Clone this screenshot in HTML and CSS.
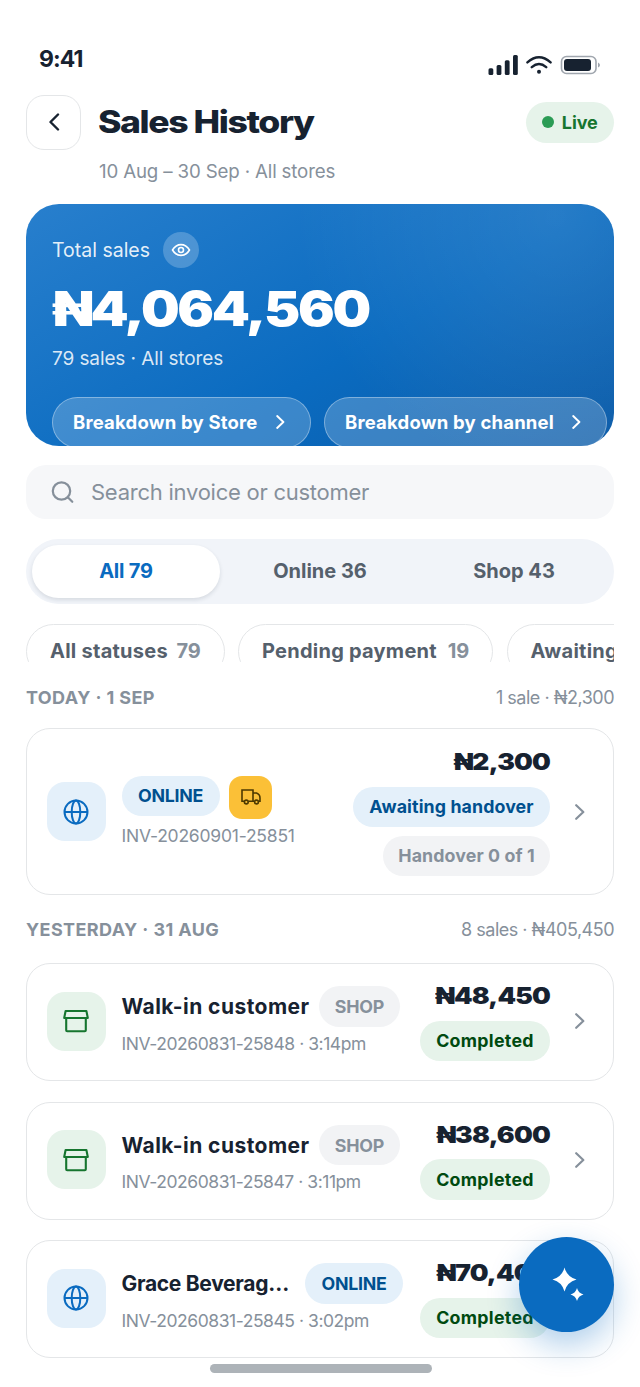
FILE: index.html
```html
<!DOCTYPE html>
<html lang="en">
<head>
<meta charset="utf-8">
<title>Sales History</title>
<link rel="stylesheet" href="styles.css">
</head>
<body>
<svg class="sprite" aria-hidden="true">
  <symbol id="globe" viewBox="0 0 26 26"><g fill="none" stroke="currentColor" stroke-width="2"><circle cx="13" cy="13" r="11.5"/><ellipse cx="13" cy="13" rx="4.3" ry="11.5"/><path d="M1.5 13h23"/></g></symbol>
  <symbol id="store" viewBox="0 0 26 26"><path d="M2.6 3h20.8l1.4 7H1.2zM3.2 10v12.2q0 1 1 1h17.600q1 0 1-1V10" fill="none" stroke="currentColor" stroke-width="2.1" stroke-linejoin="round"/></symbol>
  <symbol id="chevron" viewBox="0 0 10 16"><path d="M1.2 1.200 8.300 8l-7.100 6.800" fill="none" stroke="currentColor" stroke-width="2.2" stroke-linecap="round" stroke-linejoin="round"/></symbol>
</svg>
<div class="screen">
  <div class="status-bar">
    <span class="clock">9:41</span>
    <svg class="status-icons" width="112" height="22" viewBox="0 0 112 22">
      <g fill="#172230"><rect x="0.500" y="13.200" width="4.800" height="6.800" rx="1.500"/><rect x="8.600" y="10" width="4.800" height="10" rx="1.500"/><rect x="16.800" y="5.200" width="4.800" height="14.800" rx="1.500"/><rect x="25" y="0" width="4.800" height="20" rx="1.500"/><circle cx="51" cy="16.800" r="2"/></g>
      <path d="M39.400 7.400q11.600-10.200 23.200 0M43.800 12.200q7.200-6.300 14.400 0" fill="none" stroke="#172230" stroke-width="2.400" stroke-linecap="round"/>
      <rect x="73.500" y="1.500" width="34.500" height="17" rx="5" fill="none" stroke="#a0a6ae" stroke-width="1.600"/>
      <rect x="76" y="4" width="27" height="12" rx="3" fill="#172230"/>
      <path d="M110 7.500q2 1 2 2.500t-2 2.500z" fill="#a0a6ae"/>
    </svg>
  </div>

  <header class="header">
    <button class="back" aria-label="Back"><svg width="12" height="18" viewBox="0 0 12 18"><path d="M10 1.500 2.500 9l7.500 7.500" fill="none" stroke="#172230" stroke-width="2.400" stroke-linecap="round" stroke-linejoin="round"/></svg></button>
    <h1 class="title">Sales History</h1>
    <span class="live"><i class="live-dot"></i><span>Live</span></span>
  </header>
  <p class="subtitle">10 Aug – 30 Sep · All stores</p>

  <section class="hero">
    <div class="hero-label"><span>Total sales</span><span class="eye"><svg width="20" height="16" viewBox="0 0 20 16" fill="none" stroke="#fff" stroke-width="1.600"><path d="M1.500 8C6 0.800 14 0.800 18.500 8 14 15.200 6 15.200 1.500 8z" stroke-linejoin="round"/><circle cx="10" cy="8" r="2.500"/></svg></span></div>
    <div class="hero-amount">₦4,064,560</div>
    <div class="hero-meta">79 sales · All stores</div>
    <div class="hero-actions">
      <button class="glass store-btn"><span>Breakdown by Store</span><svg class="chev chev-sm"><use href="#chevron"/></svg></button>
      <button class="glass channel-btn"><span>Breakdown by channel</span><svg class="chev chev-sm"><use href="#chevron"/></svg></button>
    </div>
  </section>

  <div class="search"><svg width="24" height="24" viewBox="0 0 24 24" fill="none" stroke="#86909b" stroke-width="2.200" stroke-linecap="round"><circle cx="10.500" cy="11" r="8.700"/><path d="m17 17.500 4.300 4.300"/></svg><span>Search invoice or customer</span></div>

  <nav class="segments">
    <span class="segment active">All 79</span><span class="segment">Online 36</span><span class="segment">Shop 43</span>
  </nav>

  <div class="chips">
    <span class="chip chip-all"><b>All statuses</b><em>79</em></span>
    <span class="chip chip-pending"><b>Pending payment</b><em>19</em></span>
    <span class="chip chip-await"><b>Awaiting</b></span>
  </div>

  <div class="day day-today"><h2>TODAY · 1 SEP</h2><span>1 sale · ₦2,300</span></div>
  <article class="sale sale-tall">
    <span class="tile blue"><svg width="26" height="26"><use href="#globe"/></svg></span>
    <div class="info">
      <div class="badges"><span class="pill blue-pill tag-online">ONLINE</span><span class="truck"><svg width="20" height="16" viewBox="0 0 20 16" fill="none" stroke="#4d3900" stroke-width="1.600"><path d="M3 12.300H1V1h11v11.300H7.500M12 4h3.500q3.500 1.300 3.500 5v3.300h-1.500M13.500 12.300H12"/><circle cx="5.300" cy="13" r="1.900"/><circle cx="15.500" cy="13" r="1.900"/></svg></span></div>
      <div class="invoice inv-plain">INV-20260901-25851</div>
    </div>
    <div class="result"><div class="amount">₦2,300</div><span class="pill blue-pill awaiting">Awaiting handover</span><span class="pill gray-pill handover">Handover 0 of 1</span></div>
    <svg class="chev go"><use href="#chevron"/></svg>
  </article>

  <div class="day"><h2>YESTERDAY · 31 AUG</h2><span>8 sales · ₦405,450</span></div>
  <div class="sales">
    <article class="sale">
      <span class="tile green"><svg width="26" height="26"><use href="#store"/></svg></span>
      <div class="info"><div class="who"><strong>Walk-in customer</strong><span class="pill gray-pill tag-shop">SHOP</span></div><div class="invoice">INV-20260831-25848 · 3:14pm</div></div>
      <div class="result"><div class="amount">₦48,450</div><span class="pill green-pill">Completed</span></div>
      <svg class="chev go"><use href="#chevron"/></svg>
    </article>
    <article class="sale">
      <span class="tile green"><svg width="26" height="26"><use href="#store"/></svg></span>
      <div class="info"><div class="who"><strong>Walk-in customer</strong><span class="pill gray-pill tag-shop">SHOP</span></div><div class="invoice">INV-20260831-25847 · 3:11pm</div></div>
      <div class="result"><div class="amount">₦38,600</div><span class="pill green-pill">Completed</span></div>
      <svg class="chev go"><use href="#chevron"/></svg>
    </article>
    <article class="sale">
      <span class="tile blue"><svg width="26" height="26"><use href="#globe"/></svg></span>
      <div class="info"><div class="who who-online"><strong>Grace Beverag…</strong><span class="pill blue-pill tag-online">ONLINE</span></div><div class="invoice">INV-20260831-25845 · 3:02pm</div></div>
      <div class="result"><div class="amount">₦70,400</div><span class="pill green-pill">Completed</span></div>
      <svg class="chev go"><use href="#chevron"/></svg>
    </article>
  </div>
  <div class="home-bar"></div>
  <button class="fab" aria-label="Assistant"><svg width="34" height="36" viewBox="0 0 34 36" fill="#fff"><path d="M13.500 0.500Q16 10 25.500 12.500 16 15 13.500 24.500 11 15 1.500 12.500 11 10 13.500 0.500zM26 21q1.300 5.200 6.500 6.500-5.200 1.300-6.500 6.500-1.300-5.200-6.500-6.500Q24.700 26.200 26 21z"/></svg></button>
</div>
</body>
</html>
```
FILE: styles.css
```css
* { box-sizing: border-box; }
body { margin: 0; background: #fff; font-family: Inter, "Noto Sans", sans-serif; color: #172230; }
h1, h2, p { margin: 0; }
button { font: inherit; border: 0; padding: 0; }
svg { display: block; flex: none; }
.sprite { position: absolute; width: 0; height: 0; }
.screen { position: relative; width: 640px; height: 1387px; padding: 0 26px; overflow: hidden; white-space: nowrap; background: #fff; }

.status-bar { height: 94.500px; padding: 45px 14px 0 13px; display: flex; justify-content: space-between; align-items: flex-start; }
.clock { font-size: 23px; font-weight: 650; line-height: 28px; letter-spacing: -0.900px; }
.status-icons { margin: 10px 0 0; }

.header { height: 55px; display: flex; align-items: center; }
.back { width: 55px; height: 55px; border: 1.500px solid #e4e6e8; border-radius: 18px; background: #fff; display: flex; align-items: center; justify-content: center; }
.title { margin-left: 17px; font-size: 31.500px; font-weight: 800; letter-spacing: -1.250px; line-height: 40px; transform: scaleX(1.130); transform-origin: left; }
.live { margin-left: auto; width: 88px; height: 41px; border-radius: 21px; background: #e6f3ea; color: #16752f; display: flex; align-items: center; justify-content: center; gap: 7.500px; font-size: 18px; font-weight: 700; letter-spacing: -0.100px; }
.live-dot { width: 12px; height: 12px; border-radius: 50%; background: #2b9c55; }
.subtitle { margin-left: 73px; height: 54px; padding-top: 10px; line-height: 24px; font-size: 18.700px; letter-spacing: -0.150px; color: #86909b; }

.hero { height: 242px; border-radius: 33px; padding: 28px 6px 0 26px; overflow: hidden; color: #fff; background: radial-gradient(circle at 90% 5%, rgba(255,255,255,.11), rgba(255,255,255,0) 45%), linear-gradient(150deg, #287fcd 0%, #0a6bc0 58%, #0b5ba8 100%); }
.hero-label { height: 37px; display: flex; align-items: center; gap: 12.500px; font-size: 19.500px; letter-spacing: 0; color: rgba(255,255,255,.9); }
.eye { width: 36px; height: 36px; border-radius: 50%; background: rgba(255,255,255,.22); display: flex; align-items: center; justify-content: center; }
.hero-amount { height: 60px; margin-top: 10px; line-height: 60px; font-size: 48px; font-weight: 900; letter-spacing: -2px; transform: scaleX(1.135); transform-origin: left; }
.hero-meta { height: 28px; margin-top: 5px; line-height: 29px; font-size: 19px; letter-spacing: -0.100px; color: rgba(255,255,255,.85); }
.hero-actions { margin-top: 25px; display: flex; gap: 13.500px; }
.glass { height: 51px; flex: none; border: 1.500px solid rgba(255,255,255,.35); border-radius: 26px; background: rgba(255,255,255,.2); color: #fff; display: flex; align-items: center; justify-content: space-between; padding: 0 25px 1px 20px; font-size: 18.500px; font-weight: 700; letter-spacing: 0.200px; }
.store-btn { width: 258.500px; }
.channel-btn { width: 283px; }
.chev { width: 10px; height: 16px; }
.chev-sm { width: 9px; height: 14px; }

.search { margin-top: 19.500px; height: 54px; border-radius: 20px; background: #f6f7f9; padding-left: 25px; display: flex; align-items: center; gap: 16px; font-size: 22px; letter-spacing: -0.250px; color: #86909b; }
.segments { margin-top: 20px; height: 65px; padding: 6px; border-radius: 33px; background: #f1f4f9; display: grid; grid-template-columns: repeat(3, 1fr); gap: 6px; }
.segment { display: flex; align-items: center; justify-content: center; padding-bottom: 1px; border-radius: 27px; font-size: 20px; font-weight: 700; letter-spacing: 0; color: #55606c; }
.segment.active { background: #fff; color: #0a6bc0; box-shadow: 0 2px 4px rgba(20,35,50,.12); letter-spacing: -0.200px; }
.chips { margin-top: 19.500px; height: 38.500px; overflow: hidden; display: flex; gap: 13.500px; }
.chip { flex: none; height: 55px; border: 1.500px solid #e4e6e8; border-radius: 28px; padding: 0 23px; display: flex; align-items: center; justify-content: space-between; font-size: 20px; letter-spacing: 0.250px; color: #55606c; }
.chip b, .chip em { font-weight: 700; font-style: normal; }
.chip em { color: #86909b; font-weight: 650; letter-spacing: -0.200px; }
.chip-all { width: 198.500px; }
.chip-pending { width: 255px; }
.chip-await { width: 270px; }

.day { height: 68px; display: flex; align-items: center; justify-content: space-between; font-size: 18px; letter-spacing: -0.500px; color: #86909b; }
.day-today { height: 66px; padding-top: 4px; }
.day h2 { font-size: 18px; font-weight: 700; letter-spacing: 0.400px; }
.sales { display: grid; gap: 20.500px; }
.sale { height: 118px; border: 1.500px solid #e4e6e8; border-radius: 24px; padding: 0 28px 2px 19.500px; display: flex; align-items: center; background: #fff; }
.sale-tall { height: 167px; padding-bottom: 0; }
.tile { width: 59px; height: 59px; flex: none; border-radius: 18px; display: flex; align-items: center; justify-content: center; }
.blue { background: #e4f0fa; color: #0a6bc0; }
.green { background: #e6f3ea; color: #16752f; }
.info { flex: 1; min-width: 0; margin-left: 16px; }
.badges { height: 43px; display: flex; gap: 9.500px; }
.truck { width: 43px; height: 43px; border-radius: 13px; background: #fbc037; display: flex; align-items: center; justify-content: center; }
.who { height: 40.500px; display: flex; align-items: center; gap: 10.500px; }
.who strong { width: 187px; font-size: 21px; font-weight: 700; letter-spacing: 0.450px; }
.who-online strong { width: 173px; letter-spacing: -0.300px; }
.invoice { height: 24px; margin-top: 5px; line-height: 24px; font-size: 17.500px; letter-spacing: -0.450px; color: #86909b; }
.inv-plain { letter-spacing: -0.220px; }
.pill { height: 40.500px; flex: none; border-radius: 21px; display: flex; align-items: center; justify-content: center; font-size: 17.800px; font-weight: 700; letter-spacing: 0.100px; }
.tag-online { width: 98px; letter-spacing: -0.300px; }
.tag-shop { width: 81px; letter-spacing: -0.200px; }
.blue-pill { background: #e4f0fa; color: #00508f; }
.gray-pill { background: #f2f3f5; color: #86909b; }
.green-pill { width: 130px; letter-spacing: 0.300px; background: #e6f3ea; color: #004a10; }
.awaiting { width: 197px; }
.handover { width: 167px; margin-top: 8.500px; }
.result { display: flex; flex-direction: column; align-items: flex-end; padding-bottom: 1px; }
.amount { height: 33px; line-height: 33px; margin-bottom: 7.500px; font-size: 23px; font-weight: 900; letter-spacing: -0.700px; transform: scaleX(1.150); transform-origin: right; }
.go { margin-left: 25px; color: #86909b; }
.home-bar { margin: 6px 0 0 184px; width: 222px; height: 9px; border-radius: 5px; background: #adb3b8; }
.fab { position: absolute; left: 519px; top: 1237px; width: 95px; height: 95px; border-radius: 50%; background: #0a6bc0; box-shadow: 0 13px 32px rgba(10,107,192,.32); display: flex; align-items: center; justify-content: center; padding-left: 2px; }
```
